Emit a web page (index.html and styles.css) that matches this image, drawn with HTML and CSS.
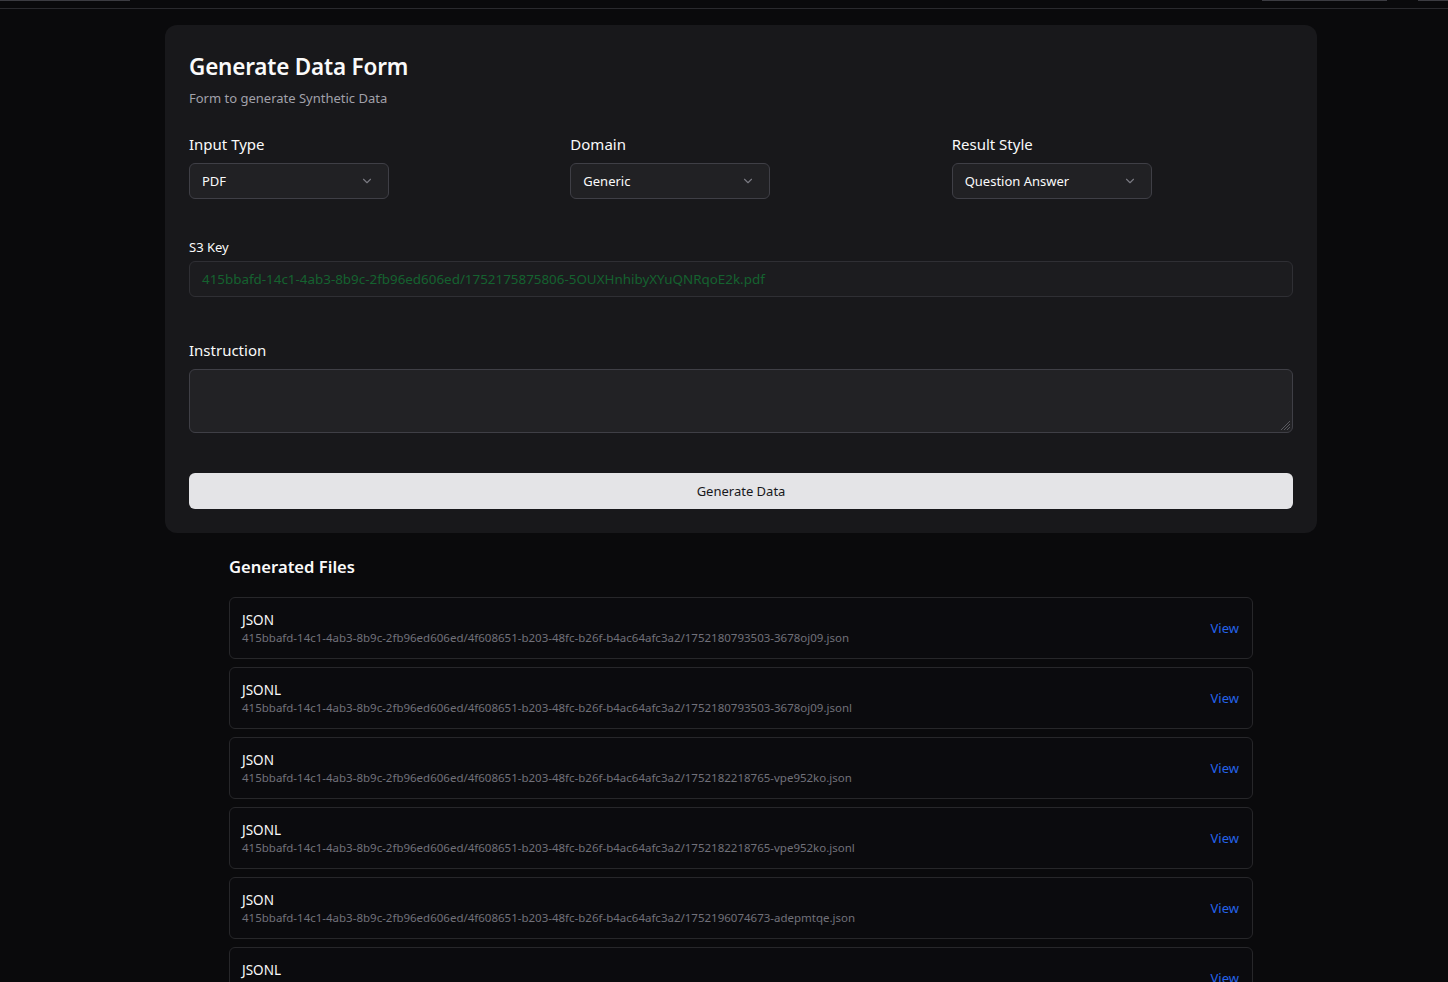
FILE: index.html
```html
<!DOCTYPE html>
<html lang="en">
<head>
<meta charset="utf-8">
<title>Generate Data Form</title>
<link rel="stylesheet" href="styles.css">
</head>
<body>
<header class="topbar">
  <span class="tb-piece tb-left"></span>
  <span class="tb-spacer"></span>
  <span class="tb-piece tb-right1"></span>
  <span class="tb-piece tb-right2"></span>
</header>
<main class="main">
  <section class="card">
    <h1 class="title">Generate Data Form</h1>
    <p class="subtitle">Form to generate Synthetic Data</p>

    <div class="grid3">
      <div class="field">
        <label class="label">Input Type</label>
        <div class="select"><span>PDF</span><svg class="chev" viewBox="0 0 16 16" width="14" height="14"><path d="M4 6l4 4 4-4" fill="none" stroke="currentColor" stroke-width="1.3" stroke-linecap="round" stroke-linejoin="round"/></svg></div>
      </div>
      <div class="field">
        <label class="label">Domain</label>
        <div class="select"><span>Generic</span><svg class="chev" viewBox="0 0 16 16" width="14" height="14"><path d="M4 6l4 4 4-4" fill="none" stroke="currentColor" stroke-width="1.3" stroke-linecap="round" stroke-linejoin="round"/></svg></div>
      </div>
      <div class="field">
        <label class="label">Result Style</label>
        <div class="select"><span>Question Answer</span><svg class="chev" viewBox="0 0 16 16" width="14" height="14"><path d="M4 6l4 4 4-4" fill="none" stroke="currentColor" stroke-width="1.3" stroke-linecap="round" stroke-linejoin="round"/></svg></div>
      </div>
    </div>

    <div class="s3">
      <label class="label small">S3 Key</label>
      <div class="input">415bbafd-14c1-4ab3-8b9c-2fb96ed606ed/1752175875806-5OUXHnhibyXYuQNRqoE2k.pdf</div>
    </div>

    <div class="instr">
      <label class="label">Instruction</label>
      <div class="textarea"><svg class="grip" viewBox="0 0 10 10" width="10" height="10"><path d="M9 3L3 9M9 6L6 9M9 0L0 9" stroke="#5a5a60" stroke-width="1"/></svg></div>
    </div>

    <button class="btn">Generate Data</button>
  </section>

  <section class="files">
    <h2 class="files-title">Generated Files</h2>
    <ul class="file-list">
      <li class="file"><div class="file-info"><div class="file-type">JSON</div><div class="file-path">415bbafd-14c1-4ab3-8b9c-2fb96ed606ed/4f608651-b203-48fc-b26f-b4ac64afc3a2/1752180793503-3678oj09.json</div></div><a class="view">View</a></li>
      <li class="file"><div class="file-info"><div class="file-type">JSONL</div><div class="file-path">415bbafd-14c1-4ab3-8b9c-2fb96ed606ed/4f608651-b203-48fc-b26f-b4ac64afc3a2/1752180793503-3678oj09.jsonl</div></div><a class="view">View</a></li>
      <li class="file"><div class="file-info"><div class="file-type">JSON</div><div class="file-path">415bbafd-14c1-4ab3-8b9c-2fb96ed606ed/4f608651-b203-48fc-b26f-b4ac64afc3a2/1752182218765-vpe952ko.json</div></div><a class="view">View</a></li>
      <li class="file"><div class="file-info"><div class="file-type">JSONL</div><div class="file-path">415bbafd-14c1-4ab3-8b9c-2fb96ed606ed/4f608651-b203-48fc-b26f-b4ac64afc3a2/1752182218765-vpe952ko.jsonl</div></div><a class="view">View</a></li>
      <li class="file"><div class="file-info"><div class="file-type">JSON</div><div class="file-path">415bbafd-14c1-4ab3-8b9c-2fb96ed606ed/4f608651-b203-48fc-b26f-b4ac64afc3a2/1752196074673-adepmtqe.json</div></div><a class="view">View</a></li>
      <li class="file"><div class="file-info"><div class="file-type">JSONL</div><div class="file-path">415bbafd-14c1-4ab3-8b9c-2fb96ed606ed/4f608651-b203-48fc-b26f-b4ac64afc3a2/1752196074673-adepmtqe.jsonl</div></div><a class="view">View</a></li>
    </ul>
  </section>
</main>
</body>
</html>
```

FILE: styles.css
```css
* { box-sizing: border-box; }
html, body { margin: 0; padding: 0; }
body {
  background: #0a0a0c;
  color: #fafafa;
  font-family: "Noto Sans", "Open Sans", sans-serif;
  height: 982px;
  overflow: hidden;
}
.topbar {
  display: flex;
  align-items: flex-start;
  height: 9px;
  border-bottom: 1px solid #2a2a2e;
}
.tb-piece { height: 1px; background: #3c3c42; display: block; }
.tb-left { width: 130px; }
.tb-spacer { flex: 1; }
.tb-right1 { width: 125px; margin-right: 31px; }
.tb-right2 { width: 30px; }

.main {
  padding-left: 165px;
  width: 1317px;
}
.card {
  margin-top: 16px;
  width: 1152px;
  background: #18181b;
  border-radius: 12px;
  padding: 24px;
}
.title {
  margin: 2px 0 0;
  font-size: 22.5px;
  line-height: 32px;
  font-weight: 600;
  letter-spacing: -0.2px;
}
.subtitle {
  margin: 5px 0 0;
  font-size: 13px;
  line-height: 20px;
  color: #a1a1aa;
}
.grid3 {
  margin-top: 24px;
  display: grid;
  grid-template-columns: repeat(3, 1fr);
  column-gap: 40px;
}
.label {
  display: block;
  font-size: 15px;
  line-height: 24px;
  color: #fafafa;
}
.label.small { font-size: 13px; line-height: 20px; }
.select {
  margin-top: 7px;
  width: 200px;
  height: 36px;
  border: 1px solid #3f3f46;
  border-radius: 6px;
  background: #212124;
  display: flex;
  align-items: center;
  justify-content: space-between;
  padding: 0 14px 0 12px;
  font-size: 13px;
  color: #fafafa;
}
.chev { color: #7a7a82; }
.s3 { margin-top: 38px; }
.input {
  margin-top: 4px;
  height: 36px;
  border: 1px solid #2f2f34;
  border-radius: 6px;
  background: #1c1c1f;
  display: flex;
  align-items: center;
  padding: 0 12px;
  font-size: 13.4px;
  color: #15622f;
}
.instr { margin-top: 41px; }
.textarea {
  margin-top: 7px;
  height: 64px;
  border: 1px solid #3f3f46;
  border-radius: 6px;
  background: #222225;
  position: relative;
}
.grip { position: absolute; right: 1px; bottom: 1px; }
.btn {
  display: block;
  width: 100%;
  margin-top: 40px;
  height: 36px;
  border: none;
  border-radius: 6px;
  background: #e4e4e7;
  color: #18181b;
  font-family: inherit;
  font-size: 13px;
}
.files {
  padding: 0 64px;
  width: 1152px;
}
.files-title {
  margin: 20px 0 0;
  font-size: 16.6px;
  line-height: 28px;
  font-weight: 600;
}
.file-list {
  list-style: none;
  margin: 16px 0 0;
  padding: 0;
  display: flex;
  flex-direction: column;
  gap: 8px;
}
.file {
  display: flex;
  align-items: center;
  justify-content: space-between;
  border: 1px solid #27272a;
  border-radius: 6px;
  background: #0b0b0e;
  padding: 12px 13px 12px 12px;
}
.file-type { font-size: 13.5px; line-height: 20px; color: #fafafa; }
.file-path { font-size: 11.5px; line-height: 16px; color: #71717a; }
.view { font-size: 13px; color: #2563eb; cursor: pointer; }
```
